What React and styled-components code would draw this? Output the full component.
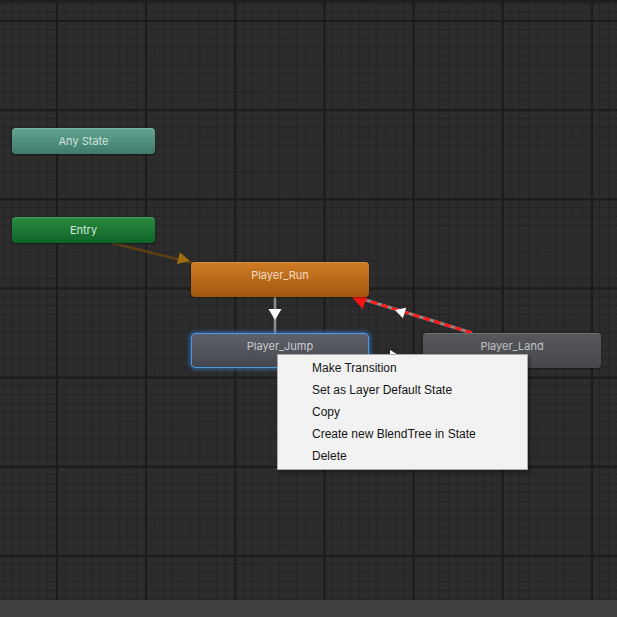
import styled, { createGlobalStyle, css } from 'styled-components'

/*---> Data <---*/
const states = [
  { id: 'any', label: 'Any State', kind: 'any', x: 12, y: 128, w: 143, h: 26 },
  { id: 'entry', label: 'Entry', kind: 'entry', x: 12, y: 217, w: 143, h: 26 },
  { id: 'run', label: 'Player_Run', kind: 'default', x: 191, y: 262, w: 178, h: 35 },
  { id: 'jump', label: 'Player_Jump', kind: 'selected', x: 191, y: 333, w: 178, h: 35 },
  { id: 'land', label: 'Player_Land', kind: 'normal', x: 423, y: 333, w: 178, h: 35 },
]

const menuItems = [
  'Make Transition',
  'Set as Layer Default State',
  'Copy',
  'Create new BlendTree in State',
  'Delete',
]

// arrow head polygon, tip at (x, y), pointing along angle (deg)
const head = (x, y, angle, len, half) => {
  const a = (angle * Math.PI) / 180
  const bx = x - Math.cos(a) * len
  const by = y - Math.sin(a) * len
  const px = -Math.sin(a) * half
  const py = Math.cos(a) * half
  return `${x},${y} ${bx + px},${by + py} ${bx - px},${by - py}`
}

const angleOf = (x1, y1, x2, y2) => (Math.atan2(y2 - y1, x2 - x1) * 180) / Math.PI

/*---> Component <---*/
const Transitions = () => {
  const entryAngle = angleOf(112, 243, 193, 263)
  const landAngle = angleOf(472, 333, 352, 296)
  return (
    <Wires width="617" height="600" viewBox="0 0 617 600">
      {/* Entry -> Player_Run */}
      <line x1="112" y1="243" x2="193" y2="263" stroke="#5c4012" strokeWidth="2.5" />
      <polygon points={head(190, 261, entryAngle, 12, 6)} fill="#a06e12" />

      {/* Player_Run -> Player_Jump */}
      <line x1="275" y1="297" x2="275" y2="333" stroke="#8d8d8d" strokeWidth="2.5" />
      <polygon points={head(275, 320, 90, 11, 6.5)} fill="#ffffff" />

      {/* Player_Jump -> Player_Land (under the menu) */}
      <line x1="369" y1="356" x2="423" y2="356" stroke="#8d8d8d" strokeWidth="2.5" />
      <polygon points={head(400, 356, 0, 10, 6)} fill="#ffffff" />

      {/* Player_Land -> Player_Run */}
      <line x1="472" y1="333" x2="356" y2="297" stroke="#8a8a8a" strokeWidth="3" />
      <line
        x1="472"
        y1="333"
        x2="356"
        y2="297"
        stroke="#ff1a1a"
        strokeWidth="3"
        strokeDasharray="7 4"
      />
      <polygon points={head(351, 296, landAngle, 15, 9)} fill="#ff1414" />
      <polygon points={head(395, 310, landAngle, 10, 5.5)} fill="#ffffff" />
    </Wires>
  )
}

export default function App() {
  return (
    <>
      <GlobalStyle />
      <Window>
        <Canvas>
          <TopShade />
          <Transitions />
          {states.map((s) => (
            <StateNode
              key={s.id}
              $kind={s.kind}
              style={{ left: s.x, top: s.y, width: s.w, height: s.h }}
            >
              {s.label}
            </StateNode>
          ))}
          <ContextMenu>
            {menuItems.map((item) => (
              <MenuItem key={item}>{item}</MenuItem>
            ))}
          </ContextMenu>
        </Canvas>
        <BottomBar />
      </Window>
    </>
  )
}

/*---> Styles <---*/
const GlobalStyle = createGlobalStyle`
  html, body {
    margin: 0;
    padding: 0;
    background: #2a2a2a;
  }
  body {
    font-family: Inter, "Liberation Sans", sans-serif;
  }
`

const Window = styled.div`
  width: 617px;
  height: 617px;
  display: flex;
  flex-direction: column;
  overflow: hidden;
`

const Canvas = styled.div`
  position: relative;
  flex: 0 0 600px;
  background-color: #2c2c2c;
  background-image:
    linear-gradient(to right, #1c1c1c 0, #1c1c1c 2px, transparent 2px),
    linear-gradient(to bottom, #1c1c1c 0, #1c1c1c 2px, transparent 2px),
    linear-gradient(to right, #242424 0, #242424 1px, transparent 1px),
    linear-gradient(to bottom, #242424 0, #242424 1px, transparent 1px);
  background-size:
    89.2px 89.2px,
    89.2px 89.2px,
    8.92px 8.92px,
    8.92px 8.92px;
  background-position:
    56px 20px,
    56px 20px,
    56px 20px,
    56px 20px;
  overflow: hidden;
`

const TopShade = styled.div`
  position: absolute;
  left: 0;
  right: 0;
  top: 0;
  height: 5px;
  background: linear-gradient(to bottom, #1c1c1c, rgba(28, 28, 28, 0));
`

const Wires = styled.svg`
  position: absolute;
  left: 0;
  top: 0;
`

const kinds = {
  any: css`
    background: linear-gradient(to bottom, #62a592, #3f7b6d);
    color: #cfe2dc;
    padding-top: 6px;
  `,
  entry: css`
    background: linear-gradient(to bottom, #2b8a40, #0d6428);
    color: #d6ead9;
    padding-top: 6px;
  `,
  default: css`
    background: linear-gradient(to bottom, #d17c24, #a2570f);
    color: #f3dcc4;
    padding-top: 6px;
  `,
  selected: css`
    background: linear-gradient(to bottom, #5e6169, #45484f);
    color: #c9cbcf;
    padding-top: 5px;
    border: 1px solid #4d9be6;
    box-shadow: 0 0 4px 1px rgba(60, 140, 230, 0.7);
  `,
  normal: css`
    background: linear-gradient(to bottom, #56585c, #46484c);
    color: #c2c3c5;
    padding-top: 6px;
  `,
}

const StateNode = styled.div`
  position: absolute;
  box-sizing: border-box;
  border-radius: 4px;
  font-family: Inter, "Liberation Sans", sans-serif;
  font-size: 11px;
  line-height: 14px;
  text-align: center;
  box-shadow: inset 0 1px 0 rgba(255, 255, 255, 0.15), 0 1px 2px rgba(0, 0, 0, 0.4);
  ${({ $kind }) => kinds[$kind]}
`

const ContextMenu = styled.div`
  position: absolute;
  left: 277px;
  top: 354px;
  width: 251px;
  box-sizing: border-box;
  padding: 2px 0 2px;
  background: #f2f2f2;
  border: 1px solid #a9a9a9;
  box-shadow: 2px 2px 3px rgba(0, 0, 0, 0.35);
  display: flex;
  flex-direction: column;
`

const MenuItem = styled.div`
  height: 22px;
  line-height: 22px;
  padding-left: 34px;
  font-family: "Liberation Sans", Arial, sans-serif;
  font-size: 12px;
  color: #151515;
  white-space: nowrap;
`

const BottomBar = styled.div`
  flex: 1;
  background: #414141;
`
